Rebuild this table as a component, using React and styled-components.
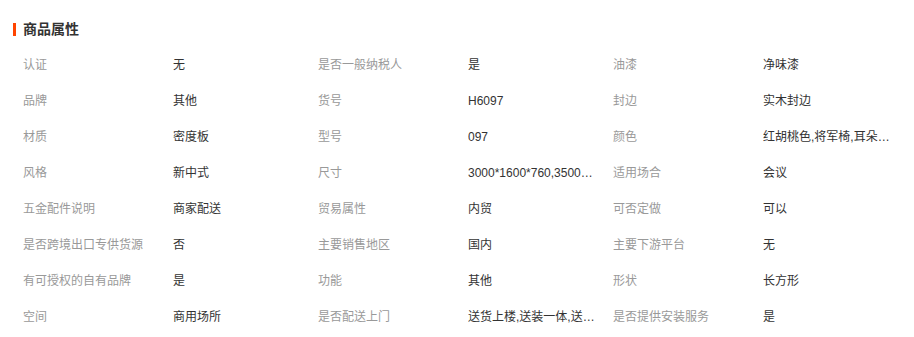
import styled, { createGlobalStyle } from "styled-components";

const GlobalStyle = createGlobalStyle`
  body {
    margin: 0;
    background: #fff;
    font-family: "Liberation Sans", "Noto Sans CJK SC", sans-serif;
  }
`;

const Wrapper = styled.div`
  width: 914px;
  height: 337px;
  padding: 21px 0 0 13px;
  box-sizing: border-box;
  background: #fff;
`;

const Heading = styled.h3`
  display: flex;
  align-items: center;
  gap: 7px;
  margin: 0;
  height: 16px;
  font-size: 14px;
  font-weight: bold;
  color: #333;
  line-height: 16px;

  &::before {
    content: "";
    width: 3px;
    height: 13px;
    background: #ff4400;
  }
`;

const Table = styled.div`
  display: grid;
  grid-template-columns: 150px 145px 150px 145px 150px 127px;
  margin: 10px 0 0 10px;
`;

const Cell = styled.div`
  height: 36px;
  line-height: 36px;
  font-size: 12px;
  color: ${(p) => (p.$label ? "#999" : "#333")};
  white-space: nowrap;
  overflow: hidden;
  text-overflow: ellipsis;
  padding-right: ${(p) => (p.$label ? "0" : "18px")};

  &:nth-child(6n) {
    padding-right: 0;
  }
`;

const rows = [
  ["认证", "无", "是否一般纳税人", "是", "油漆", "净味漆"],
  ["品牌", "其他", "货号", "H6097", "封边", "实木封边"],
  ["材质", "密度板", "型号", "097", "颜色", "红胡桃色,将军椅,耳朵椅,主席台"],
  ["风格", "新中式", "尺寸", "3000*1600*760,3500*1800*760", "适用场合", "会议"],
  ["五金配件说明", "商家配送", "贸易属性", "内贸", "可否定做", "可以"],
  ["是否跨境出口专供货源", "否", "主要销售地区", "国内", "主要下游平台", "无"],
  ["有可授权的自有品牌", "是", "功能", "其他", "形状", "长方形"],
  ["空间", "商用场所", "是否配送上门", "送货上楼,送装一体,送货到家", "是否提供安装服务", "是"],
];

export default function App() {
  return (
    <Wrapper>
      <GlobalStyle />
      <Heading>商品属性</Heading>
      <Table>
        {rows.flatMap((row, r) =>
          row.map((text, i) => (
            <Cell key={`${r}-${i}`} $label={i % 2 === 0} title={text}>
              {text}
            </Cell>
          ))
        )}
      </Table>
    </Wrapper>
  );
}
